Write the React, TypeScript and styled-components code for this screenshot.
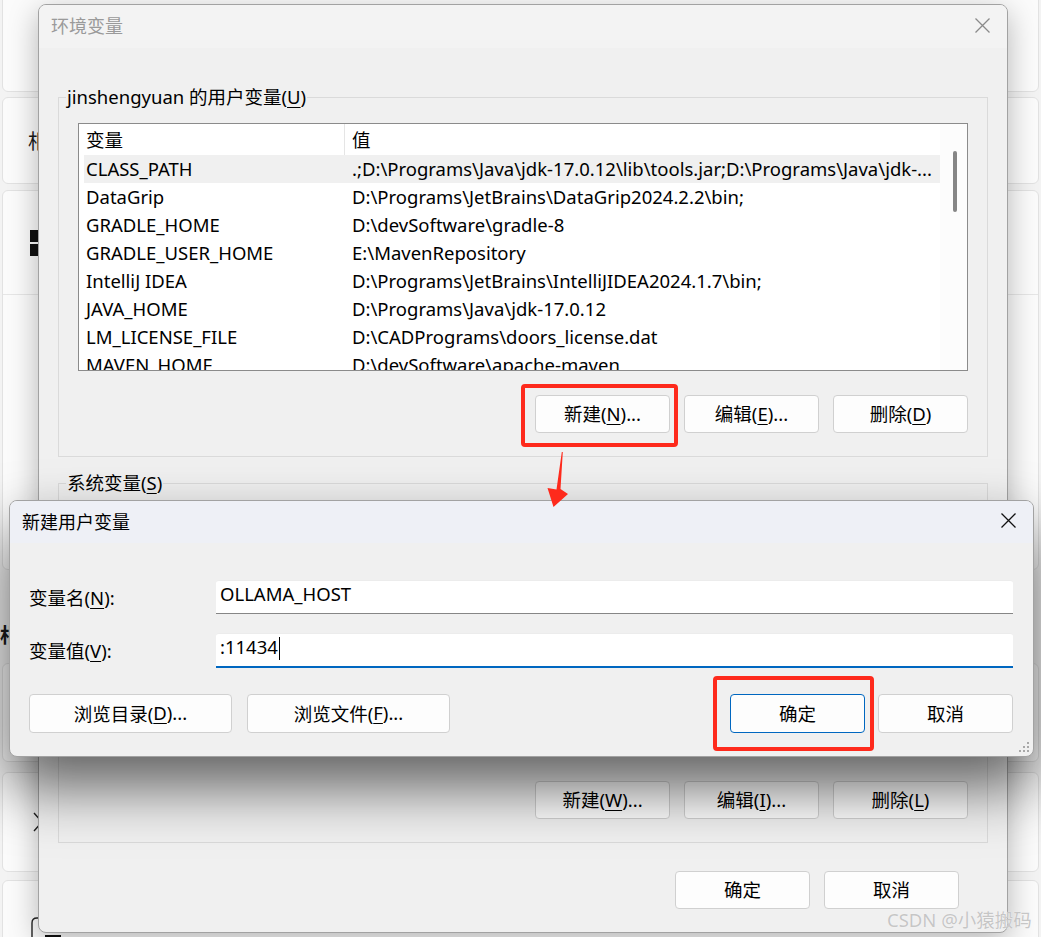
import React from "react";
import styled, { createGlobalStyle } from "styled-components";

const FONT = `"Noto Sans", "Noto Sans CJK SC", sans-serif`;

const GlobalStyle = createGlobalStyle`
  html, body { margin: 0; padding: 0; }
  body { background: #f3f3f3; font-family: ${FONT}; overflow: hidden; }
  * { box-sizing: border-box; }
`;

const Stage = styled.div`
  position: relative;
  width: 1041px;
  height: 937px;
  overflow: hidden;
  background: #f3f3f3;
  font-family: ${FONT};
  font-size: 18.5px;
  color: #000;
`;

/* ---------- background settings page ---------- */
const SettingsPage = styled.div`
  display: flex;
  flex-direction: column;
  padding: 0 2px;
  margin-top: -8px;
`;

const BgCard = styled.div<{ $h: number; $gap?: number }>`
  height: ${(p) => p.$h}px;
  margin-bottom: ${(p) => p.$gap ?? 0}px;
  flex: none;
  background: #fbfbfb;
  border: 1px solid #e2e2e2;
  border-radius: 6px;
  display: flex;
  flex-direction: column;
  overflow: hidden;
`;

const BgRow = styled.div<{ $h: number; $divider?: boolean; $pl?: number }>`
  height: ${(p) => p.$h}px;
  flex: none;
  display: flex;
  align-items: center;
  padding-left: ${(p) => p.$pl ?? 25}px;
  border-bottom: ${(p) => (p.$divider ? "1px solid #e6e6e6" : "none")};
  font-size: 20px;
  color: #1a1a1a;
`;

const BgHeading = styled.div<{ $h: number }>`
  height: ${(p) => p.$h}px;
  flex: none;
  display: flex;
  align-items: flex-end;
  padding-bottom: 14px;
  margin-left: -2px;
  font-size: 20px;
  font-weight: 600;
  color: #1a1a1a;
`;

const BlackSquare = styled.span`
  width: 16px;
  height: 16px;
  margin: 54px 0 0 2px;
  align-self: flex-start;
  background: #111;
  display: inline-block;
`;

/* ---------- windows ---------- */
const Window = styled.div<{
  $x: number;
  $y: number;
  $w: number;
  $h: number;
  $shadow: string;
}>`
  position: absolute;
  left: ${(p) => p.$x}px;
  top: ${(p) => p.$y}px;
  width: ${(p) => p.$w}px;
  height: ${(p) => p.$h}px;
  background: #f0f0f0;
  border: 1px solid #a2a2a2;
  border-radius: 8px;
  box-shadow: ${(p) => p.$shadow};
  overflow: hidden;
  display: flex;
  flex-direction: column;
`;

const TitleBar = styled.div<{ $active?: boolean; $h: number }>`
  height: ${(p) => p.$h}px;
  flex: none;
  display: flex;
  align-items: center;
  justify-content: space-between;
  padding: 0 17px 3px 12px;
  background: ${(p) => (p.$active ? "#eef0f6" : "#f3f3f3")};
  color: ${(p) => (p.$active ? "#000" : "#9a9a9a")};
  font-size: 18px;
`;

const CloseIcon = ({ color }: { color: string }) => (
  <svg width="15" height="15" viewBox="0 0 15 15">
    <path d="M0.5 0.5 L14.5 14.5 M14.5 0.5 L0.5 14.5" stroke={color} strokeWidth="1.3" fill="none" />
  </svg>
);

const MainBody = styled.div`
  flex: 1;
  display: flex;
  flex-direction: column;
  padding: 37px 19px 0 19px;
`;

const Group = styled.fieldset<{ $mt?: number }>`
  margin: ${(p) => p.$mt ?? 0}px 0 0 0;
  border: 1px solid #dadada;
  padding: 0 19px 23px 19px;
  min-width: 0;
  display: flex;
  flex-direction: column;
`;

const GroupLegend = styled.legend`
  padding: 0 1px;
  margin-left: -12px;
  line-height: 24px;
  font-size: 18.5px;
  color: #000;
`;

const Mn = styled.u`
  text-decoration-thickness: 1px;
  text-underline-offset: 3px;
`;

const ListBox = styled.div`
  margin-top: 14px;
  height: 248px;
  flex: none;
  border: 1px solid #8b8b8b;
  background: #fff;
  display: grid;
  grid-template-columns: 1fr 27px;
  overflow: hidden;
`;

const ListMain = styled.div`
  display: flex;
  flex-direction: column;
  min-width: 0;
  overflow: hidden;
`;

const HeaderRow = styled.div`
  display: grid;
  grid-template-columns: 266px 1fr;
  height: 31px;
  flex: none;
`;

const HeaderCell = styled.div<{ $divider?: boolean }>`
  padding: 0 0 2px 7px;
  display: flex;
  align-items: center;
  border-right: ${(p) => (p.$divider ? "1px solid #e5e5e5" : "none")};
`;

const Rows = styled.div`
  display: flex;
  flex-direction: column;
  padding-left: 5px;
`;

const DataRow = styled.div<{ $selected?: boolean }>`
  display: grid;
  grid-template-columns: 261px 1fr;
  height: 28px;
  flex: none;
  align-items: center;
  padding-bottom: 2px;
  background: ${(p) => (p.$selected ? "#f0f0f0" : "transparent")};
`;

const NameCell = styled.div`
  padding-left: 2px;
  white-space: nowrap;
  overflow: hidden;
`;

const ValueCell = styled.div`
  padding: 0 8px 0 7px;
  white-space: nowrap;
  overflow: hidden;
`;

const ScrollTrack = styled.div`
  background: #fcfcfc;
  display: flex;
  justify-content: center;
  padding: 27px 0 0 0;
`;

const ScrollThumb = styled.div`
  width: 4px;
  height: 61px;
  margin-left: 3px;
  border-radius: 3px;
  background: #868686;
`;

const ButtonRow = styled.div<{ $mt: number; $pr?: number; $gap?: number }>`
  display: flex;
  justify-content: flex-end;
  gap: ${(p) => p.$gap ?? 14}px;
  margin-top: ${(p) => p.$mt}px;
  padding-right: ${(p) => p.$pr ?? 0}px;
`;

const WinButton = styled.button<{ $w: number; $h: number; $focus?: boolean }>`
  width: ${(p) => p.$w}px;
  height: ${(p) => p.$h}px;
  flex: none;
  background: #fdfdfd;
  border: 1px solid ${(p) => (p.$focus ? "#0067c0" : "#d0d0d0")};
  border-radius: 4px;
  font-family: ${FONT};
  font-size: 18.5px;
  color: #000;
  padding: 0 0 2px 0;
  display: flex;
  align-items: center;
  justify-content: center;
`;

/* ---------- new variable dialog ---------- */
const NewBody = styled.div`
  flex: 1;
  display: flex;
  flex-direction: column;
  padding: 37px 20px 0 19px;
  position: relative;
`;

const FormGrid = styled.div`
  display: grid;
  grid-template-columns: 187px 1fr;
  row-gap: 19px;
  align-items: center;
`;

const FieldLabel = styled.div`
  white-space: nowrap;
  padding-bottom: 1px;
`;

const TextBox = styled.div<{ $focus?: boolean }>`
  height: ${(p) => (p.$focus ? 35 : 34)}px;
  background: #fff;
  border-top: 1px solid #ececec;
  border-bottom: ${(p) => (p.$focus ? "2px solid #0067c0" : "1px solid #868686")};
  border-radius: 3px 3px 0 0;
  padding: 0 0 7px 4px;
  display: flex;
  align-items: center;
  white-space: nowrap;
`;

const Caret = styled.span`
  display: inline-block;
  width: 1px;
  height: 23px;
  background: #000;
  margin: 3px 0 0 1px;
`;

const DialogButtons = styled.div`
  display: flex;
  justify-content: space-between;
  margin-top: 26px;
`;

const ButtonGroup = styled.div<{ $gap: number }>`
  display: flex;
  gap: ${(p) => p.$gap}px;
`;

const Grip = styled.svg`
  position: absolute;
  right: 3px;
  bottom: 3px;
`;

/* ---------- annotations ---------- */
const RedBox = styled.div<{ $x: number; $y: number; $w: number; $h: number }>`
  position: absolute;
  left: ${(p) => p.$x}px;
  top: ${(p) => p.$y}px;
  width: ${(p) => p.$w}px;
  height: ${(p) => p.$h}px;
  border: 4px solid #fe2a1c;
  border-radius: 4px;
  pointer-events: none;
`;

const ArrowSvg = styled.svg`
  position: absolute;
  left: 540px;
  top: 448px;
`;

const Watermark = styled.div`
  position: absolute;
  left: 887px;
  top: 906px;
  font-size: 18.5px;
  color: #c6c6c6;
  white-space: nowrap;
  text-shadow: 0 0 1px #fff;
`;

const userVars: [string, string][] = [
  ["CLASS_PATH", ".;D:\\Programs\\Java\\jdk-17.0.12\\lib\\tools.jar;D:\\Programs\\Java\\jdk-..."],
  ["DataGrip", "D:\\Programs\\JetBrains\\DataGrip2024.2.2\\bin;"],
  ["GRADLE_HOME", "D:\\devSoftware\\gradle-8"],
  ["GRADLE_USER_HOME", "E:\\MavenRepository"],
  ["IntelliJ IDEA", "D:\\Programs\\JetBrains\\IntelliJIDEA2024.1.7\\bin;"],
  ["JAVA_HOME", "D:\\Programs\\Java\\jdk-17.0.12"],
  ["LM_LICENSE_FILE", "D:\\CADPrograms\\doors_license.dat"],
  ["MAVEN_HOME", "D:\\devSoftware\\apache-maven"],
];

const VarList = ({
  rows,
  selected,
  header = true,
}: {
  rows: [string, string][];
  selected?: number;
  header?: boolean;
}) => (
  <ListBox>
    <ListMain>
      <HeaderRow>
        <HeaderCell $divider>{header ? "变量" : null}</HeaderCell>
        <HeaderCell>{header ? "值" : null}</HeaderCell>
      </HeaderRow>
      <Rows>
        {rows.map(([n, v], i) => (
          <DataRow key={n} $selected={i === selected}>
            <NameCell>{n}</NameCell>
            <ValueCell>{v}</ValueCell>
          </DataRow>
        ))}
      </Rows>
    </ListMain>
    <ScrollTrack>
      <ScrollThumb />
    </ScrollTrack>
  </ListBox>
);

export default function App() {
  return (
    <>
      <GlobalStyle />
      <Stage>
        <SettingsPage>
          <BgCard $h={100} $gap={5} />
          <BgCard $h={87} $gap={6}>
            <BgRow $h={85}>相</BgRow>
          </BgCard>
          <BgCard $h={380}>
            <BgRow $h={104} $divider $pl={27}>
              <svg width="26" height="26" viewBox="0 0 26 26">
                <rect x="0" y="0" width="12" height="12" fill="#111" />
                <rect x="14" y="0" width="12" height="12" fill="#111" />
                <rect x="0" y="14" width="12" height="12" fill="#111" />
                <rect x="14" y="14" width="12" height="12" fill="#111" />
              </svg>
            </BgRow>
          </BgCard>
          <BgHeading $h={93}>相</BgHeading>
          <BgCard $h={99} $gap={10} />
          <BgCard $h={100} $gap={8}>
            <BgRow $h={98} $pl={30}>
              <svg width="10" height="20" viewBox="0 0 10 20">
                <path d="M1 1 L9 10 L1 19" stroke="#222" strokeWidth="1.4" fill="none" />
              </svg>
            </BgRow>
          </BgCard>
          <BgCard $h={130}>
            <BgRow $h={60} $pl={28}>
              <svg width="12" height="24" viewBox="0 0 12 24" style={{ alignSelf: "flex-end" }}>
                <path d="M1 24 V6 Q1 1 6 1 H11" stroke="#222" strokeWidth="1.4" fill="none" />
              </svg>
              <BlackSquare />
            </BgRow>
          </BgCard>
        </SettingsPage>

        <Window $x={38} $y={4} $w={970} $h={929} $shadow="0 8px 30px rgba(0,0,0,0.28)">
          <TitleBar $h={43}>
            <span>环境变量</span>
            <CloseIcon color="#8a8a8a" />
          </TitleBar>
          <MainBody>
            <Group>
              <GroupLegend>
                jinshengyuan 的用户变量(<Mn>U</Mn>)
              </GroupLegend>
              <VarList rows={userVars} selected={0} />
              <ButtonRow $mt={24}>
                <WinButton $w={135} $h={38}>
                  新建(<Mn>N</Mn>)...
                </WinButton>
                <WinButton $w={135} $h={38}>
                  编辑(<Mn>E</Mn>)...
                </WinButton>
                <WinButton $w={135} $h={38}>
                  删除(<Mn>D</Mn>)
                </WinButton>
              </ButtonRow>
            </Group>
            <Group $mt={14}>
              <GroupLegend>
                系统变量(<Mn>S</Mn>)
              </GroupLegend>
              <VarList rows={[]} header={false} />
              <ButtonRow $mt={24}>
                <WinButton $w={135} $h={38}>
                  新建(<Mn>W</Mn>)...
                </WinButton>
                <WinButton $w={135} $h={38}>
                  编辑(<Mn>I</Mn>)...
                </WinButton>
                <WinButton $w={135} $h={38}>
                  删除(<Mn>L</Mn>)
                </WinButton>
              </ButtonRow>
            </Group>
            <ButtonRow $mt={28} $pr={29}>
              <WinButton $w={135} $h={38}>
                确定
              </WinButton>
              <WinButton $w={135} $h={38}>
                取消
              </WinButton>
            </ButtonRow>
          </MainBody>
        </Window>

        <Window $x={9} $y={500} $w={1025} $h={257} $shadow="0 30px 60px rgba(0,0,0,0.6)">
          <TitleBar $h={42} $active>
            <span>新建用户变量</span>
            <CloseIcon color="#111" />
          </TitleBar>
          <NewBody>
            <FormGrid>
              <FieldLabel>
                变量名(<Mn>N</Mn>):
              </FieldLabel>
              <TextBox>OLLAMA_HOST</TextBox>
              <FieldLabel>
                变量值(<Mn>V</Mn>):
              </FieldLabel>
              <TextBox $focus>
                :11434
                <Caret />
              </TextBox>
            </FormGrid>
            <DialogButtons>
              <ButtonGroup $gap={15}>
                <WinButton $w={203} $h={39}>
                  浏览目录(<Mn>D</Mn>)...
                </WinButton>
                <WinButton $w={203} $h={39}>
                  浏览文件(<Mn>F</Mn>)...
                </WinButton>
              </ButtonGroup>
              <ButtonGroup $gap={13}>
                <WinButton $w={135} $h={39} $focus>
                  确定
                </WinButton>
                <WinButton $w={135} $h={39}>
                  取消
                </WinButton>
              </ButtonGroup>
            </DialogButtons>
            <Grip width="12" height="12" viewBox="0 0 12 12">
              <rect x="9" y="1" width="2" height="2" fill="#a8a8a8" />
              <rect x="5" y="5" width="2" height="2" fill="#a8a8a8" />
              <rect x="9" y="5" width="2" height="2" fill="#a8a8a8" />
              <rect x="1" y="9" width="2" height="2" fill="#a8a8a8" />
              <rect x="5" y="9" width="2" height="2" fill="#a8a8a8" />
              <rect x="9" y="9" width="2" height="2" fill="#a8a8a8" />
            </Grip>
          </NewBody>
        </Window>

        <RedBox $x={521} $y={384} $w={157} $h={63} />
        <RedBox $x={713} $y={676} $w={161} $h={75} />
        <ArrowSvg width="36" height="62" viewBox="0 0 36 62">
          <polygon
            points="22.8,4 20.5,41 28,46 13.5,59 7.5,40 16.5,41.5 21.8,4"
            fill="#fe2a1c"
          />
        </ArrowSvg>
        <Watermark>CSDN @小猿搬码</Watermark>
      </Stage>
    </>
  );
}
